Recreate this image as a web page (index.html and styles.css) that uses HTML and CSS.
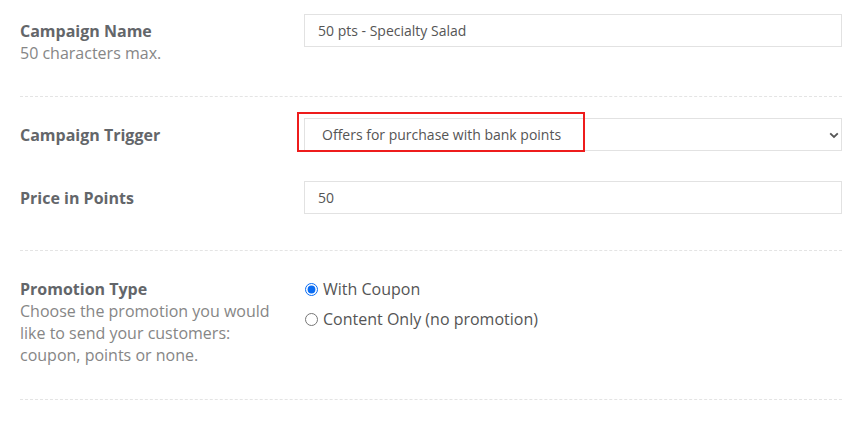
FILE: index.html
```html
<!DOCTYPE html>
<html lang="en">
<head>
<meta charset="utf-8">
<title>Campaign</title>
<link rel="stylesheet" href="styles.css">
</head>
<body>
<div class="form">
  <section class="section first">
    <div class="row">
      <div class="label-col">
        <div class="label">Campaign Name</div>
        <div class="desc">50 characters max.</div>
      </div>
      <div class="field-col">
        <input class="text-input" type="text" value="50 pts - Specialty Salad">
      </div>
    </div>
  </section>
  <div class="divider"></div>
  <section class="section second">
    <div class="row">
      <div class="label-col">
        <div class="label">Campaign Trigger</div>
      </div>
      <div class="field-col">
        <div class="select-wrap">
          <select class="select">
            <option>Offers for purchase with bank points</option>
          </select>
          <svg class="chevron" width="10" height="7" viewBox="0 0 10 7"><path d="M1.2 1.3 L5 5 L8.8 1.3" fill="none" stroke="#555" stroke-width="1.8"/></svg>
          <div class="highlight"></div>
        </div>
      </div>
    </div>
    <div class="row price">
      <div class="label-col">
        <div class="label">Price in Points</div>
      </div>
      <div class="field-col">
        <input class="text-input" type="text" value="50">
      </div>
    </div>
  </section>
  <div class="divider"></div>
  <section class="section third">
    <div class="row">
      <div class="label-col">
        <div class="label">Promotion Type</div>
        <div class="desc">Choose the promotion you would like to send your customers: coupon, points or none.</div>
      </div>
      <div class="field-col radios">
        <label class="radio"><input type="radio" name="promo" checked><span>With Coupon</span></label>
        <label class="radio"><input type="radio" name="promo"><span>Content Only (no promotion)</span></label>
      </div>
    </div>
  </section>
  <div class="divider"></div>
</div>
</body>
</html>
```

FILE: styles.css
```css
* { box-sizing: border-box; }
html, body { margin: 0; padding: 0; background: #fff; }
body {
  font-family: "Open Sans", "Noto Sans", Arial, sans-serif;
  color: #555;
}
.form {
  padding: 0 19px 0 20px;
}
.section.first { padding: 14px 0 32px; }
.section.second { padding: 21px 0 36px; }
.section.third { padding: 27px 0 33px; }
.row {
  display: flex;
  align-items: flex-start;
}
.row.price { margin-top: 30px; }
.label-col {
  width: 284px;
  flex: none;
  padding-top: 6px;
}
.section.third .label-col { padding-top: 0; }
.label {
  font-size: 16px;
  line-height: 22px;
  font-weight: 700;
  color: #63666a;
}
.desc {
  font-size: 16px;
  line-height: 22px;
  color: #868686;
  width: 262px;
}
.field-col { flex: 1; }
.text-input {
  display: block;
  width: 100%;
  height: 33px;
  border: 1px solid #e2e2e2;
  border-radius: 0;
  padding: 0 13px;
  font-family: inherit;
  font-size: 14px;
  color: #555;
  background: #fff;
  outline: none;
}
.select-wrap { position: relative; }
.select {
  display: block;
  width: 100%;
  height: 33px;
  border: 1px solid #e2e2e2;
  border-radius: 0;
  padding: 0 17px;
  font-family: inherit;
  font-size: 14px;
  color: #555;
  background: #fff;
  appearance: none;
  -webkit-appearance: none;
  outline: none;
}
.chevron {
  position: absolute;
  right: 3px;
  top: 14px;
}
.highlight {
  position: absolute;
  left: -7px;
  top: -6px;
  width: 288px;
  height: 40px;
  border: 2px solid #ee1c1c;
  pointer-events: none;
}
.divider {
  border-top: 1px dashed #e4e4e4;
  height: 0;
}
.radios {
  display: flex;
  flex-direction: column;
  gap: 8px;
}
.radio {
  display: flex;
  align-items: center;
  font-size: 16px;
  line-height: 22px;
  color: #555;
}
.radio input {
  margin: 0 5px 0 1px;
  width: 13px;
  height: 13px;
  accent-color: #0a6cf2;
}
```
